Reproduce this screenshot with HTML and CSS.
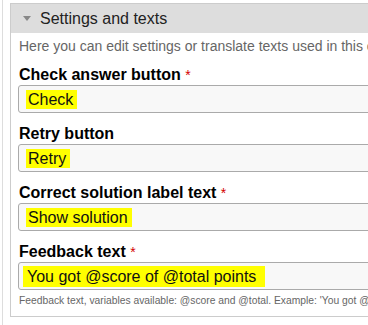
FILE: index.html
```html
<!DOCTYPE html>
<html lang="en">
  <head>
    <meta charset="UTF-8" />
    <meta name="viewport" content="width=device-width, initial-scale=1.0" />
    <title>Settings and texts</title>
    <link rel="stylesheet" href="styles.css">
  </head>
  <body>
    <div class="page">
      <div class="group">
        <div class="group_head">
          <span class="arrow"></span>
          <span class="group_title">Settings and texts</span>
        </div>
        <div class="group_body">
          <p class="desc">Here you can edit settings or translate texts used in this content.</p>

          <div class="field">
            <label class="field_label">Check answer button <span class="req">*</span></label>
            <div class="input"><span class="mark">Check</span></div>
          </div>

          <div class="field">
            <label class="field_label">Retry button</label>
            <div class="input"><span class="mark">Retry</span></div>
          </div>

          <div class="field">
            <label class="field_label">Correct solution label text <span class="req">*</span></label>
            <div class="input"><span class="mark">Show solution</span></div>
          </div>

          <div class="field">
            <label class="field_label">Feedback text <span class="req">*</span></label>
            <div class="input"><span class="mark mark_wide">You got @score of @total points</span></div>
            <div class="hint">Feedback text, variables available: @score and @total. Example: 'You got @score of @total possible points'</div>
          </div>
        </div>
      </div>
    </div>
  </body>
</html>
```

FILE: styles.css
```css
body {
  margin: 0;
  overflow: hidden;
  font-family: "Liberation Sans", Arial, sans-serif;
  background: #fff;
  color: #000;
}

.page {
  margin-left: 2px;
  border-left: 1px solid #ddd;
  padding: 3px 0 0 7px;
  min-height: 330px;
}

.group {
  width: 460px;
  border: 1px solid #ccc;
}

.group_head {
  display: flex;
  align-items: center;
  height: 29px;
  padding-left: 12px;
  background: #ddd;
}

.arrow {
  width: 0;
  height: 0;
  border-left: 4px solid transparent;
  border-right: 4px solid transparent;
  border-top: 5px solid #888;
  margin-right: 9px;
}

.group_title {
  font-size: 16px;
  color: #222;
}

.group_body {
  padding: 0 9px 9px 8px;
}

.desc {
  margin: 6px 0 0;
  font-size: 14px;
  line-height: 15px;
  color: #666;
  white-space: nowrap;
}

.field {
  margin-top: 11px;
}

.field_label {
  display: block;
  font-size: 16px;
  font-weight: bold;
  line-height: 20px;
  white-space: nowrap;
}

.req {
  font-weight: normal;
  font-size: 14px;
  color: #d40000;
}

.input {
  display: flex;
  align-items: center;
  height: 26px;
  margin-left: -1px;
  padding-left: 7px;
  border: 1px solid #aaa;
  border-radius: 3px;
  background: #f8f8f8;
}

.mark {
  background: #ff0;
  padding: 0 4px 0 2px;
  font-size: 16px;
  line-height: 19px;
  color: #111;
  white-space: nowrap;
}

.mark_wide {
  margin-left: -3px;
  padding: 1px 9px 1px 4px;
}

.hint {
  margin-top: 4px;
  font-size: 10.3px;
  line-height: 13px;
  color: #666;
  white-space: nowrap;
}
```
